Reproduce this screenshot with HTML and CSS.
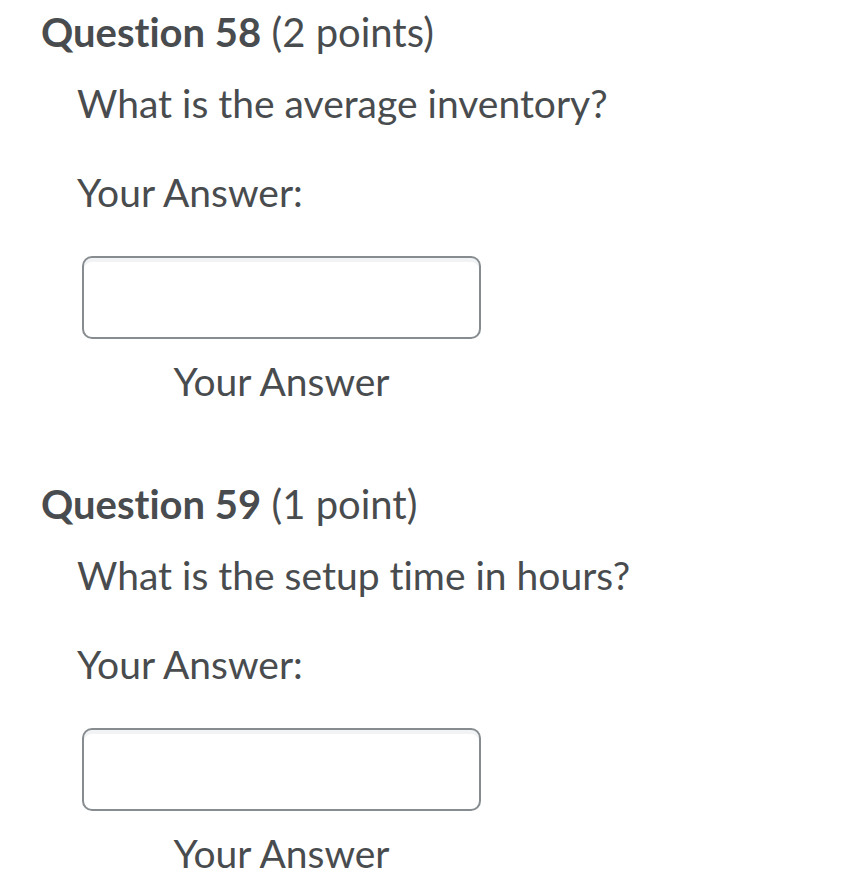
FILE: index.html
```html
<!DOCTYPE html>
<html>
<head>
<meta charset="utf-8">
<link rel="stylesheet" href="styles.css">
</head>
<body>
<div class="quiz">
  <section class="question">
    <h2 class="q-title"><strong>Question 58</strong> (2 points)</h2>
    <div class="q-body">
      <p class="q-text">What is the average inventory?</p>
      <p class="q-label">Your Answer:</p>
      <div class="answer">
        <div class="input-box"></div>
        <div class="caption">Your Answer</div>
      </div>
    </div>
  </section>
  <section class="question">
    <h2 class="q-title"><strong>Question 59</strong> (1 point)</h2>
    <div class="q-body">
      <p class="q-text">What is the setup time in hours?</p>
      <p class="q-label">Your Answer:</p>
      <div class="answer">
        <div class="input-box"></div>
        <div class="caption">Your Answer</div>
      </div>
    </div>
  </section>
</div>
</body>
</html>
```
FILE: styles.css
```css
* { box-sizing: border-box; }
html, body { margin: 0; padding: 0; background: #fff; }
body {
  font-family: Lato, "Liberation Sans", sans-serif;
  color: #494c4e;
  font-variant-ligatures: none;
}
.quiz {
  display: flex;
  flex-direction: column;
  gap: 75px;
  padding: 8px 0 0 41px;
}
.q-title {
  margin: 0;
  font-size: 40px;
  line-height: 48px;
  font-weight: 400;
}
.q-title strong { font-weight: 700; }
.q-body {
  padding-left: 36px;
  margin-top: 23px;
  display: flex;
  flex-direction: column;
}
.q-text {
  margin: 0;
  font-size: 39px;
  line-height: 48px;
}
.q-label {
  margin: 41px 0 0;
  font-size: 39px;
  line-height: 48px;
}
.answer {
  margin-top: 40px;
  margin-left: 5px;
  width: 399px;
  display: flex;
  flex-direction: column;
  align-items: center;
}
.input-box {
  width: 399px;
  height: 83px;
  border: 2px solid #868c8f;
  border-radius: 10px;
  background: #fff;
  box-shadow: inset 0 4px 0 #f1f3f5;
}
.caption {
  margin-top: 18px;
  font-size: 39px;
  line-height: 48px;
}
```
